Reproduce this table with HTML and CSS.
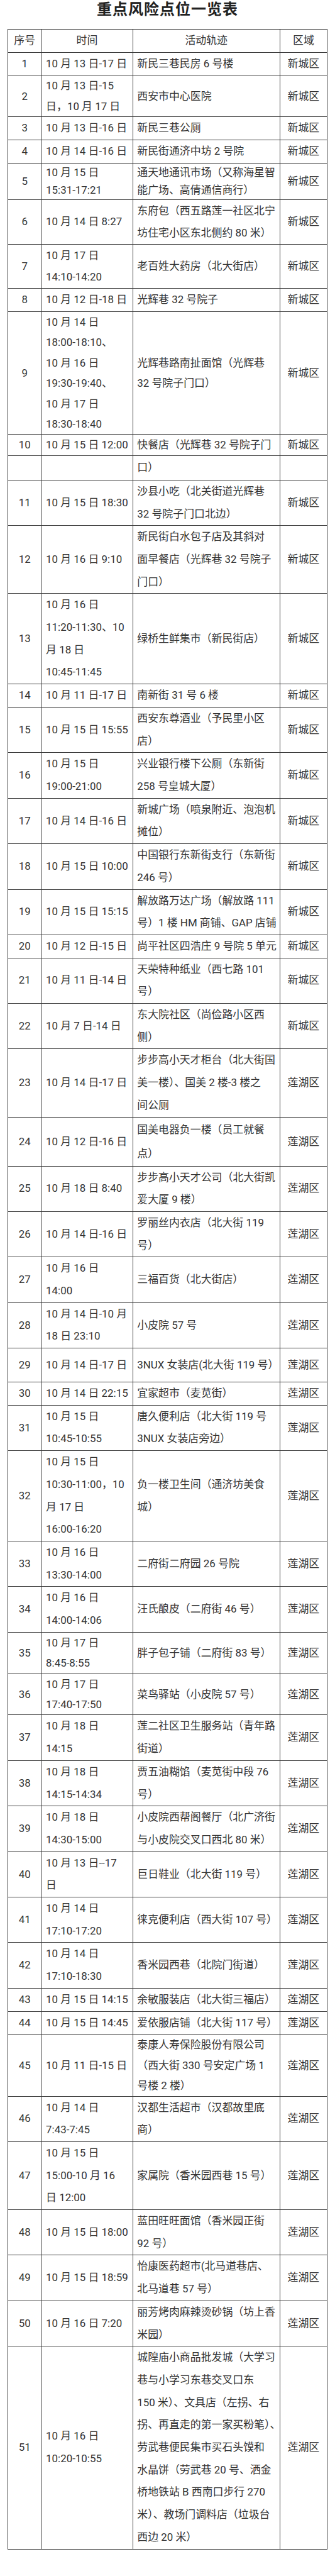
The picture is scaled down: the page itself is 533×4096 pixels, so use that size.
FILE: index.html
```html
<!DOCTYPE html>
<html lang="zh-CN">
<head>
<meta charset="utf-8">
<title>重点风险点位一览表</title>
<link rel="stylesheet" href="styles.css">
</head>
<body>
<h1 class="title">重点风险点位一览表</h1>
<table class="risk">
<colgroup>
<col class="w-no"><col class="w-time"><col class="w-act"><col class="w-zone">
</colgroup>
<thead>
<tr><th>序号</th><th>时间</th><th>活动轨迹</th><th>区域</th></tr>
</thead>
<tbody>
<tr><td class="c-no">1</td><td class="c-time">10 月 13 日-17 日</td><td class="c-act">新民三巷民房 6 号楼</td><td class="c-zone">新城区</td></tr>
<tr class="compact"><td class="c-no">2</td><td class="c-time">10 月 13 日-15<br>日，10 月 17 日</td><td class="c-act">西安市中心医院</td><td class="c-zone">新城区</td></tr>
<tr><td class="c-no">3</td><td class="c-time">10 月 13 日-16 日</td><td class="c-act">新民三巷公厕</td><td class="c-zone">新城区</td></tr>
<tr><td class="c-no">4</td><td class="c-time">10 月 14 日-16 日</td><td class="c-act">新民街通济中坊 2 号院</td><td class="c-zone">新城区</td></tr>
<tr class="dense"><td class="c-no">5</td><td class="c-time">10 月 15 日<br>15:31-17:21</td><td class="c-act">通天地通讯市场（又称海星智<br>能广场、高倩通信商行）</td><td class="c-zone">新城区</td></tr>
<tr class="snug"><td class="c-no">6</td><td class="c-time">10 月 14 日 8:27</td><td class="c-act">东府包（西五路莲一社区北宁<br>坊住宅小区东北侧约 80 米）</td><td class="c-zone">新城区</td></tr>
<tr class="snug"><td class="c-no">7</td><td class="c-time">10 月 17 日<br>14:10-14:20</td><td class="c-act">老百姓大药房（北大街店）</td><td class="c-zone">新城区</td></tr>
<tr><td class="c-no">8</td><td class="c-time">10 月 12 日-18 日</td><td class="c-act">光辉巷 32 号院子</td><td class="c-zone">新城区</td></tr>
<tr class="compact"><td class="c-no">9</td><td class="c-time">10 月 14 日<br>18:00-18:10、<br>10 月 16 日<br>19:30-19:40、<br>10 月 17 日<br>18:30-18:40</td><td class="c-act">光辉巷路南扯面馆（光辉巷<br>32 号院子门口）</td><td class="c-zone">新城区</td></tr>
<tr class="split-top"><td class="c-no">10</td><td class="c-time">10 月 15 日 12:00</td><td class="c-act">快餐店（光辉巷 32 号院子门</td><td class="c-zone">新城区</td></tr>
<tr class="split-bottom"><td class="c-no"></td><td class="c-time"></td><td class="c-act">口）</td><td class="c-zone"></td></tr>
<tr><td class="c-no">11</td><td class="c-time">10 月 15 日 18:30</td><td class="c-act">沙县小吃（北关街道光辉巷<br>32 号院子门口北边）</td><td class="c-zone">新城区</td></tr>
<tr><td class="c-no">12</td><td class="c-time">10 月 16 日 9:10</td><td class="c-act">新民街白水包子店及其斜对<br>面早餐店（光辉巷 32 号院子<br>门口）</td><td class="c-zone">新城区</td></tr>
<tr><td class="c-no">13</td><td class="c-time">10 月 16 日<br>11:20-11:30、10<br>月 18 日<br>10:45-11:45</td><td class="c-act">绿桥生鲜集市（新民街店）</td><td class="c-zone">新城区</td></tr>
<tr><td class="c-no">14</td><td class="c-time">10 月 11 日-17 日</td><td class="c-act">南新街 31 号 6 楼</td><td class="c-zone">新城区</td></tr>
<tr><td class="c-no">15</td><td class="c-time">10 月 15 日 15:55</td><td class="c-act">西安东尊酒业（予民里小区<br>店）</td><td class="c-zone">新城区</td></tr>
<tr><td class="c-no">16</td><td class="c-time">10 月 15 日<br>19:00-21:00</td><td class="c-act">兴业银行楼下公厕（东新街<br>258 号皇城大厦）</td><td class="c-zone">新城区</td></tr>
<tr><td class="c-no">17</td><td class="c-time">10 月 14 日-16 日</td><td class="c-act">新城广场（喷泉附近、泡泡机<br>摊位）</td><td class="c-zone">新城区</td></tr>
<tr><td class="c-no">18</td><td class="c-time">10 月 15 日 10:00</td><td class="c-act">中国银行东新街支行（东新街<br>246 号）</td><td class="c-zone">新城区</td></tr>
<tr><td class="c-no">19</td><td class="c-time">10 月 15 日 15:15</td><td class="c-act">解放路万达广场（解放路 111<br>号）1 楼 HM 商铺、GAP 店铺</td><td class="c-zone">新城区</td></tr>
<tr><td class="c-no">20</td><td class="c-time">10 月 12 日-15 日</td><td class="c-act">尚平社区四浩庄 9 号院 5 单元</td><td class="c-zone">新城区</td></tr>
<tr><td class="c-no">21</td><td class="c-time">10 月 11 日-14 日</td><td class="c-act">天荣特种纸业（西七路 101<br>号）</td><td class="c-zone">新城区</td></tr>
<tr><td class="c-no">22</td><td class="c-time">10 月 7 日-14 日</td><td class="c-act">东大院社区（尚俭路小区西<br>侧）</td><td class="c-zone">新城区</td></tr>
<tr><td class="c-no">23</td><td class="c-time">10 月 14 日-17 日</td><td class="c-act">步步高小天才柜台（北大街国<br>美一楼）、国美 2 楼-3 楼之<br>间公厕</td><td class="c-zone">莲湖区</td></tr>
<tr class="loose"><td class="c-no">24</td><td class="c-time">10 月 12 日-16 日</td><td class="c-act">国美电器负一楼（员工就餐<br>点）</td><td class="c-zone">莲湖区</td></tr>
<tr><td class="c-no">25</td><td class="c-time">10 月 18 日 8:40</td><td class="c-act">步步高小天才公司（北大街凯<br>爱大厦 9 楼）</td><td class="c-zone">莲湖区</td></tr>
<tr><td class="c-no">26</td><td class="c-time">10 月 14 日-16 日</td><td class="c-act">罗丽丝内衣店（北大街 119<br>号）</td><td class="c-zone">莲湖区</td></tr>
<tr><td class="c-no">27</td><td class="c-time">10 月 16 日<br>14:00</td><td class="c-act">三福百货（北大街店）</td><td class="c-zone">莲湖区</td></tr>
<tr><td class="c-no">28</td><td class="c-time">10 月 14 日-10 月<br>18 日 23:10</td><td class="c-act">小皮院 57 号</td><td class="c-zone">莲湖区</td></tr>
<tr class="tall"><td class="c-no">29</td><td class="c-time">10 月 14 日-17 日</td><td class="c-act">3NUX 女装店(北大街 119 号）</td><td class="c-zone">莲湖区</td></tr>
<tr><td class="c-no">30</td><td class="c-time">10 月 14 日 22:15</td><td class="c-act">宜家超市（麦苋街）</td><td class="c-zone">莲湖区</td></tr>
<tr><td class="c-no">31</td><td class="c-time">10 月 15 日<br>10:45-10:55</td><td class="c-act">唐久便利店（北大街 119 号<br>3NUX 女装店旁边）</td><td class="c-zone">莲湖区</td></tr>
<tr><td class="c-no">32</td><td class="c-time">10 月 15 日<br>10:30-11:00，10<br>月 17 日<br>16:00-16:20</td><td class="c-act">负一楼卫生间（通济坊美食<br>城）</td><td class="c-zone">莲湖区</td></tr>
<tr><td class="c-no">33</td><td class="c-time">10 月 16 日<br>13:30-14:00</td><td class="c-act">二府街二府园 26 号院</td><td class="c-zone">莲湖区</td></tr>
<tr><td class="c-no">34</td><td class="c-time">10 月 16 日<br>14:00-14:06</td><td class="c-act">汪氏酿皮（二府街 46 号）</td><td class="c-zone">莲湖区</td></tr>
<tr class="compact"><td class="c-no">35</td><td class="c-time">10 月 17 日<br>8:45-8:55</td><td class="c-act">胖子包子铺（二府街 83 号）</td><td class="c-zone">莲湖区</td></tr>
<tr class="compact"><td class="c-no">36</td><td class="c-time">10 月 17 日<br>17:40-17:50</td><td class="c-act">菜鸟驿站（小皮院 57 号）</td><td class="c-zone">莲湖区</td></tr>
<tr><td class="c-no">37</td><td class="c-time">10 月 18 日<br>14:15</td><td class="c-act">莲二社区卫生服务站（青年路<br>街道）</td><td class="c-zone">莲湖区</td></tr>
<tr><td class="c-no">38</td><td class="c-time">10 月 18 日<br>14:15-14:34</td><td class="c-act">贾五油糊馅（麦苋街中段 76<br>号）</td><td class="c-zone">莲湖区</td></tr>
<tr><td class="c-no">39</td><td class="c-time">10 月 18 日<br>14:30-15:00</td><td class="c-act">小皮院西帮阁餐厅（北广济街<br>与小皮院交叉口西北 80 米）</td><td class="c-zone">莲湖区</td></tr>
<tr><td class="c-no">40</td><td class="c-time">10 月 13 日--17<br>日</td><td class="c-act">巨日鞋业（北大街 119 号）</td><td class="c-zone">莲湖区</td></tr>
<tr><td class="c-no">41</td><td class="c-time">10 月 14 日<br>17:10-17:20</td><td class="c-act">徕克便利店（西大街 107 号）</td><td class="c-zone">莲湖区</td></tr>
<tr><td class="c-no">42</td><td class="c-time">10 月 14 日<br>17:10-18:30</td><td class="c-act">香米园西巷（北院门街道）</td><td class="c-zone">莲湖区</td></tr>
<tr><td class="c-no">43</td><td class="c-time">10 月 15 日 14:15</td><td class="c-act">余敏服装店（北大街三福店）</td><td class="c-zone">莲湖区</td></tr>
<tr><td class="c-no">44</td><td class="c-time">10 月 15 日 14:45</td><td class="c-act">爱依服店铺（北大街 117 号）</td><td class="c-zone">莲湖区</td></tr>
<tr class="compact"><td class="c-no">45</td><td class="c-time">10 月 11 日-15 日</td><td class="c-act">泰康人寿保险股份有限公司<br>（西大街 330 号安定广场 1<br>号楼 2 楼）</td><td class="c-zone">莲湖区</td></tr>
<tr><td class="c-no">46</td><td class="c-time">10 月 14 日<br>7:43-7:45</td><td class="c-act">汉都生活超市（汉都故里底<br>商）</td><td class="c-zone">莲湖区</td></tr>
<tr><td class="c-no">47</td><td class="c-time">10 月 15 日<br>15:00-10 月 16<br>日 12:00</td><td class="c-act">家属院（香米园西巷 15 号）</td><td class="c-zone">莲湖区</td></tr>
<tr><td class="c-no">48</td><td class="c-time">10 月 15 日 18:00</td><td class="c-act">蓝田旺旺面馆（香米园正街<br>92 号）</td><td class="c-zone">莲湖区</td></tr>
<tr><td class="c-no">49</td><td class="c-time">10 月 15 日 18:59</td><td class="c-act">怡康医药超市(北马道巷店、<br>北马道巷 57 号）</td><td class="c-zone">莲湖区</td></tr>
<tr><td class="c-no">50</td><td class="c-time">10 月 16 日 7:20</td><td class="c-act">丽芳烤肉麻辣烫砂锅（坊上香<br>米园）</td><td class="c-zone">莲湖区</td></tr>
<tr><td class="c-no">51</td><td class="c-time">10 月 16 日<br>10:20-10:55</td><td class="c-act">城隍庙小商品批发城（大学习<br>巷与小学习东巷交叉口东<br>150 米）、文具店（左拐、右<br>拐、再直走的第一家买粉笔<span class="halt">）、</span><br>劳武巷便民集市买石头馍和<br>水晶饼（劳武巷 20 号、洒金<br>桥地铁站 B 西南口步行 270<br>米）、教场门调料店（垃圾台<br>西边 20 米）</td><td class="c-zone">莲湖区</td></tr>
</tbody>
</table>
</body>
</html>
```

FILE: styles.css
```css
* {
  box-sizing: border-box;
}

html,
body {
  margin: 0;
  padding: 0;
  background: #ffffff;
}

body {
  width: 533px;
  font-family: Roboto, "Noto Sans CJK SC", sans-serif;
  color: #333333;
}

.title {
  margin: 0;
  height: 46px;
  font-family: "Noto Sans CJK SC", sans-serif;
  font-size: 24px;
  line-height: 26px;
  font-weight: 700;
  text-align: center;
  color: #222222;
  letter-spacing: 1px;
}

.risk {
  width: 508px;
  margin: 0 auto;
  border-collapse: collapse;
  table-layout: fixed;
  font-size: 16.9px;
}

.w-no { width: 53.3px; }
.w-time { width: 145.2px; }
.w-act { width: 234.4px; }
.w-zone { width: 75.1px; }

.risk th,
.risk td {
  border: 1px solid #3a3a3a;
  padding: 0 4px 0 6.8px;
  line-height: 35.7px;
  white-space: nowrap;
  vertical-align: middle;
  font-weight: 400;
  overflow: visible;
}

.risk th {
  text-align: center;
  padding: 0;
}

.c-no,
.c-zone {
  text-align: center;
}

.risk td.c-no,
.risk td.c-zone {
  padding: 0;
}

.c-time,
.c-act {
  text-align: left;
}

.risk tr.compact td { line-height: 32.4px; }
.risk tr.dense td { line-height: 28.7px; }
.risk tr.snug td { line-height: 34.8px; }
.risk tr.loose td { line-height: 38.5px; }
.risk tr.tall td { line-height: 52.9px; }
.risk tr.split-top td { line-height: 33px; }
.risk tr.split-bottom td { line-height: 37.5px; }

.halt {
  font-feature-settings: "halt" 1;
}
```
